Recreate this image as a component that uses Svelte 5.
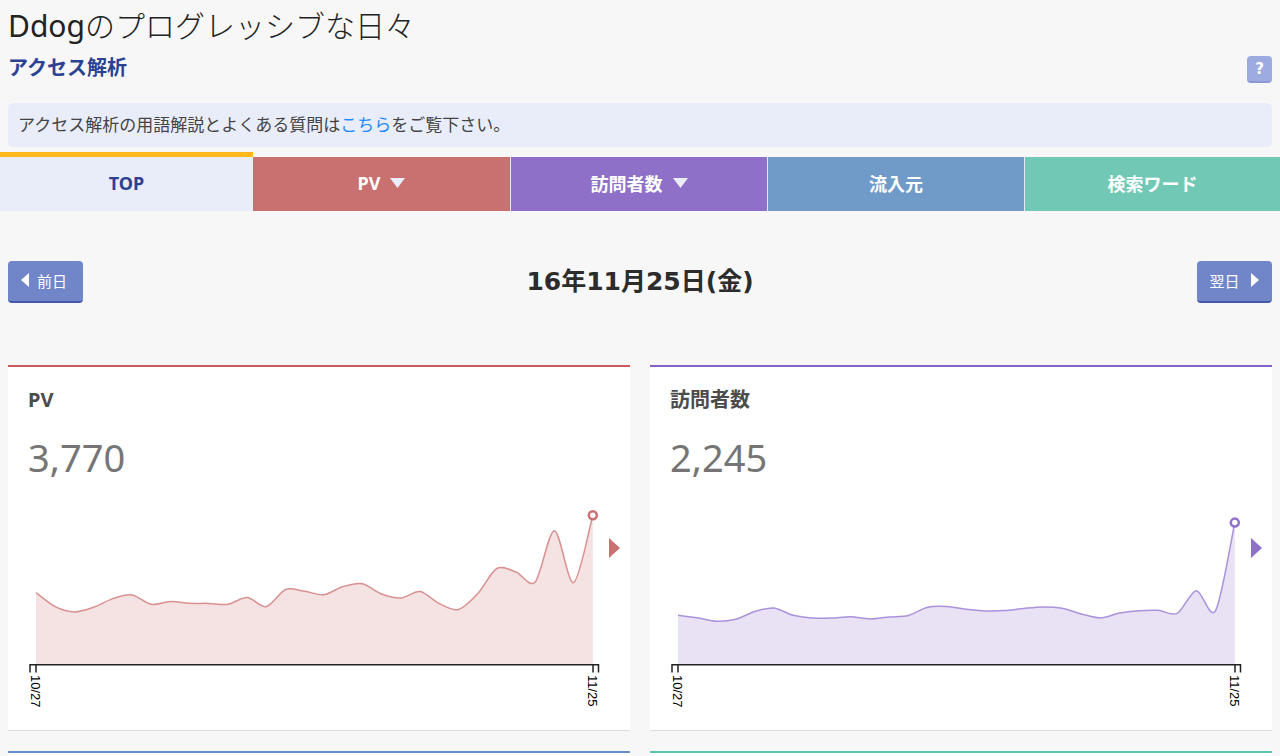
<script>
  const tabs = [
    { label: 'TOP', tone: 'top', menu: false },
    { label: 'PV', tone: 'pv', menu: true },
    { label: '訪問者数', tone: 'visitors', menu: true },
    { label: '流入元', tone: 'source', menu: false },
    { label: '検索ワード', tone: 'words', menu: false }
  ];

  const STEP = 19.2;
  const LEFT = 8;
  const BASE = 164;

  const charts = [
    {
      title: 'PV',
      total: '3,770',
      tone: 'pv',
      ys: [92.7, 106.7, 112, 107.3, 98.6, 94.9, 104.3, 101.5, 103.3, 103.4, 104.2, 97.6, 106.6, 89.5, 91.3, 94.7, 86.5, 83.7, 94, 98, 91.6, 103.5, 109.5, 93.8, 68.5, 72, 82, 30.7, 82.6, 15.3]
    },
    {
      title: '訪問者数',
      total: '2,245',
      tone: 'visitors',
      ys: [115.3, 117.8, 121.3, 119.3, 111.5, 108, 115.3, 118, 118, 116.7, 119, 117, 115.5, 107.2, 106.5, 109.3, 110.9, 110.6, 108.5, 107, 108.3, 113.9, 117.9, 113, 110.7, 110.3, 113.4, 90.7, 110.6, 22.6]
    }
  ];

  const px = (i) => LEFT + STEP * i;

  function curve(ys) {
    const k = 0.15;
    const n = ys.length - 1;
    let d = `M${px(0)},${ys[0]}`;
    for (let i = 0; i < n; i++) {
      const a = Math.max(i - 1, 0);
      const b = Math.min(i + 2, n);
      const c1x = px(i) + k * (px(i + 1) - px(a));
      const c1y = ys[i] + k * (ys[i + 1] - ys[a]);
      const c2x = px(i + 1) - k * (px(b) - px(i));
      const c2y = ys[i + 1] - k * (ys[b] - ys[i]);
      d += `C${c1x},${c1y} ${c2x},${c2y} ${px(i + 1)},${ys[i + 1]}`;
    }
    return d;
  }
</script>

<header>
  <h1><span>Ddog</span>のプログレッシブな日々</h1>
  <div class="subhead">
    <h2>アクセス解析</h2>
    <button class="help" type="button">?</button>
  </div>
  <p class="notice">アクセス解析の用語解説とよくある質問は<a href="#guide">こちら</a>をご覧下さい。</p>
</header>

<nav>
  {#each tabs as tab}
    <a class="tab {tab.tone}" href="#{tab.tone}">
      {tab.label}
      {#if tab.menu}
        <svg width="15" height="10" viewBox="0 0 15 10" aria-hidden="true"><path d="M0 0H15L7.5 10Z" fill="#eaeefa" /></svg>
      {/if}
    </a>
  {/each}
</nav>

<main>
  <div class="day">
    <button class="step" type="button">
      <svg width="8" height="14" viewBox="0 0 8 14" aria-hidden="true"><path d="M8 0V14L0 7Z" fill="#fff" /></svg>
      前日
    </button>
    <strong>16年11月25日(金)</strong>
    <button class="step next" type="button">
      翌日
      <svg width="8" height="14" viewBox="0 0 8 14" aria-hidden="true"><path d="M0 0V14L8 7Z" fill="#fff" /></svg>
    </button>
  </div>

  <div class="cards">
    {#each charts as chart}
      <section class="card {chart.tone}">
        <h3>{chart.title}</h3>
        <p class="total">{chart.total}</p>
        <svg class="chart" viewBox="0 0 582 210">
          <path class="area" d="{curve(chart.ys)}V{BASE}H{LEFT}Z" />
          <path class="line" d={curve(chart.ys)} />
          <circle cx={px(29)} cy={chart.ys[29]} r="4" />
          <path class="axis" d="M2 172.5V164.7H570.5V172.5M8 164.7V172.5M565 164.7V172.5" />
          <text transform="translate(3 175) rotate(90)">10/27</text>
          <text transform="translate(560 175) rotate(90)">11/25</text>
        </svg>
        <svg class="more" width="11" height="20" viewBox="0 0 11 20" aria-hidden="true"><path d="M0 0V20L11 10Z" /></svg>
      </section>
    {/each}
    <section class="card stub source"></section>
    <section class="card stub words"></section>
  </div>
</main>

<style>
  :global(body) {
    background: #f7f7f7;
    color: #333;
    font-family: 'Noto Sans', 'Noto Sans CJK JP', sans-serif;
  }

  h1, h2, h3, p {
    margin: 0;
  }

  header {
    padding: 5px 8px 0;
  }

  h1 {
    font-size: 30px;
    font-weight: 300;
    line-height: 42px;
    color: #222;
  }

  h1 span {
    font-weight: 400;
  }

  .subhead {
    display: flex;
    justify-content: space-between;
    align-items: flex-start;
    height: 56px;
  }

  h2 {
    font-size: 20px;
    line-height: 42px;
    color: #2b4292;
  }

  .help {
    width: 25px;
    height: 27px;
    margin-top: 9px;
    padding: 0;
    border: 0;
    border-bottom: 2px solid #8b9ad6;
    border-radius: 4px;
    background: #9dabe0;
    color: #fff;
    font: bold 15px/24px 'DejaVu Sans', sans-serif;
  }

  .notice {
    padding: 0 10px;
    border-radius: 5px;
    background: #e9edf9;
    font-size: 17px;
    line-height: 44px;
    color: #444;
  }

  .notice a {
    color: #1e88ff;
    text-decoration: none;
  }

  nav {
    display: grid;
    grid-template-columns: 253fr repeat(3, 257fr) 256fr;
    margin-top: 5px;
  }

  .tab {
    display: flex;
    justify-content: center;
    align-items: center;
    gap: 10px;
    height: 54px;
    margin-top: 5px;
    padding-bottom: 2px;
    box-sizing: border-box;
    border-left: 1px solid #e4e8f4;
    background: var(--fill);
    color: #fff;
    font-size: 18px;
    font-weight: bold;
    text-decoration: none;
  }

  .tab.top {
    height: 59px;
    margin-top: 0;
    border-top: 5px solid #ffb81c;
    border-left: 0;
    color: #2b4292;
  }

  .tab.pv {
    border-left: 0;
  }

  .top { --fill: #e9edf9; }
  .pv { --fill: #c97070; --edge: #c75c5c; --line: #d89090; --area: #f5e3e3; }
  .visitors { --fill: #8f70c9; --edge: #8560c5; --line: #ab92da; --area: #e9e2f4; }
  .source { --fill: #709bc9; --edge: #6091cd; }
  .words { --fill: #71c9b5; --edge: #5cc5ab; }

  main {
    padding: 50px 8px 0;
  }

  .day {
    display: flex;
    justify-content: space-between;
    align-items: flex-start;
  }

  .day strong {
    font: bold 25px/42px 'DejaVu Sans', 'Noto Sans CJK JP', sans-serif;
    color: #2c2c2c;
  }

  .step {
    display: flex;
    justify-content: center;
    align-items: center;
    gap: 8px;
    width: 75px;
    height: 42px;
    padding: 0 3px 2px 0;
    border: 0;
    border-bottom: 2px solid #4558a8;
    border-radius: 4px;
    background: #7186c9;
    color: #fff;
    font-family: inherit;
    font-size: 15px;
  }

  .step.next {
    gap: 12px;
    padding-right: 0;
  }

  .cards {
    display: grid;
    grid-template-columns: 1fr 1fr;
    gap: 20px;
    margin-top: 62px;
  }

  .card {
    position: relative;
    padding: 12px 20px 20px;
    border-top: 2px solid var(--edge);
    border-bottom: 1px solid #ddd;
    background: #fff;
  }

  .card.stub {
    padding: 0;
    border-bottom: 0;
    min-height: 3px;
  }

  h3 {
    font-size: 20px;
    line-height: 42px;
    color: #4c4c4c;
  }

  .total {
    font-size: 38px;
    line-height: 72px;
    color: #757575;
  }

  .chart {
    display: block;
    width: 100%;
    margin-top: 7px;
    overflow: visible;
  }

  .area { fill: var(--area); }
  .line { fill: none; stroke: var(--line); stroke-width: 1.5; }
  circle { fill: #fff; stroke: var(--fill); stroke-width: 2.5; }
  .axis { fill: none; stroke: #222; stroke-width: 1.5; }

  text {
    font: 13px 'Liberation Sans', sans-serif;
    fill: #000;
  }

  .more {
    position: absolute;
    right: 10px;
    bottom: 172px;
  }

  .more path { fill: var(--fill); }
</style>
